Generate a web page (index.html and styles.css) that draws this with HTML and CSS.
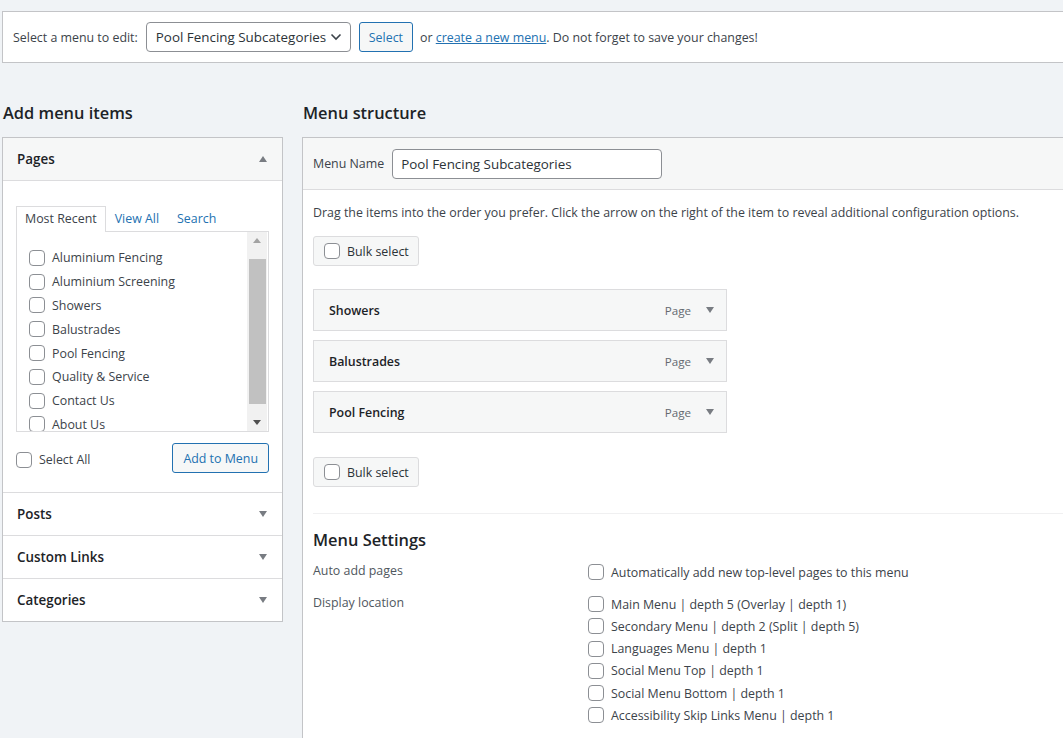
FILE: index.html
```html
<!DOCTYPE html>
<html>
<head>
<meta charset="utf-8">
<link rel="stylesheet" href="styles.css">
</head>
<body>
<div class="manage">
  <span class="label">Select a menu to edit:</span>
  <div class="select">Pool Fencing Subcategories<svg class="chev" width="12" height="8" viewBox="0 0 12 8"><path d="M1.5 1.5 L6 6 L10.5 1.5" fill="none" stroke="#3c434a" stroke-width="1.6"/></svg></div>
  <button class="btn">Select</button>
  <span class="note">or <a href="#">create a new menu</a>. Do not forget to save your changes!</span>
</div>

<div class="cols">
  <div class="left">
    <h2>Add menu items</h2>
    <div class="acc">
      <div class="sec open">
        <div class="sec-head"><span>Pages</span><i class="tri up"></i></div>
        <div class="sec-body">
          <div class="tabs">
            <span class="tab active">Most Recent</span>
            <span class="tab">View All</span>
            <span class="tab">Search</span>
          </div>
          <div class="listbox">
            <ul class="items">
              <li><span class="cb"></span>Aluminium Fencing</li>
              <li><span class="cb"></span>Aluminium Screening</li>
              <li><span class="cb"></span>Showers</li>
              <li><span class="cb"></span>Balustrades</li>
              <li><span class="cb"></span>Pool Fencing</li>
              <li><span class="cb"></span>Quality &amp; Service</li>
              <li><span class="cb"></span>Contact Us</li>
              <li><span class="cb"></span>About Us</li>
            </ul>
            <div class="sbar"><i class="sa up"></i><div class="thumb"></div><i class="sa down"></i></div>
          </div>
          <div class="actions">
            <label class="selall"><span class="cb"></span>Select All</label>
            <button class="btn add">Add to Menu</button>
          </div>
        </div>
      </div>
      <div class="sec"><div class="sec-head"><span>Posts</span><i class="tri"></i></div></div>
      <div class="sec"><div class="sec-head"><span>Custom Links</span><i class="tri"></i></div></div>
      <div class="sec"><div class="sec-head"><span>Categories</span><i class="tri"></i></div></div>
    </div>
  </div>

  <div class="right">
    <h2>Menu structure</h2>
    <div class="panel">
      <div class="panel-head">
        <span class="lbl">Menu Name</span>
        <div class="input">Pool Fencing Subcategories</div>
      </div>
      <div class="panel-body">
        <p class="drag">Drag the items into the order you prefer. Click the arrow on the right of the item to reveal additional configuration options.</p>
        <div class="bulk"><span class="cb"></span>Bulk select</div>
        <div class="mitems">
          <div class="mitem"><span class="t">Showers</span><span class="ty">Page</span><i class="tri"></i></div>
          <div class="mitem"><span class="t">Balustrades</span><span class="ty">Page</span><i class="tri"></i></div>
          <div class="mitem"><span class="t">Pool Fencing</span><span class="ty">Page</span><i class="tri"></i></div>
        </div>
        <div class="bulk"><span class="cb"></span>Bulk select</div>
        <div class="settings">
          <h3>Menu Settings</h3>
          <div class="srow">
            <span class="slabel">Auto add pages</span>
            <div class="opts"><div class="opt"><span class="cb"></span>Automatically add new top-level pages to this menu</div></div>
          </div>
          <div class="srow loc">
            <span class="slabel">Display location</span>
            <div class="opts">
              <div class="opt"><span class="cb"></span>Main Menu | depth 5 (Overlay | depth 1)</div>
              <div class="opt"><span class="cb"></span>Secondary Menu | depth 2 (Split | depth 5)</div>
              <div class="opt"><span class="cb"></span>Languages Menu | depth 1</div>
              <div class="opt"><span class="cb"></span>Social Menu Top | depth 1</div>
              <div class="opt"><span class="cb"></span>Social Menu Bottom | depth 1</div>
              <div class="opt"><span class="cb"></span>Accessibility Skip Links Menu | depth 1</div>
            </div>
          </div>
        </div>
      </div>
    </div>
  </div>
</div>
</body>
</html>
```
FILE: styles.css
```css
* { box-sizing: border-box; }
html, body { margin: 0; padding: 0; }
body {
  background: #f0f3f6;
  font-family: "Open Sans", "Noto Sans", sans-serif;
  font-size: 12.4px;
  color: #3c434a;
  overflow: hidden;
  height: 738px;
}
.manage {
  margin: 11px 0 0 2px;
  height: 52px;
  background: #fff;
  border: 1px solid #c3c4c7;
  border-right: none;
  display: flex;
  align-items: center;
  padding-left: 10px;
  white-space: nowrap;
}
.manage .label { margin-right: 8px; }
.select {
  width: 205px;
  height: 30px;
  border: 1px solid #8c8f94;
  border-radius: 4px;
  display: flex;
  align-items: center;
  justify-content: space-between;
  padding: 0 8px 0 9px;
  font-size: 13.4px;
  color: #2c3338;
  white-space: nowrap;
}
.btn {
  font: inherit;
  height: 30px;
  border: 1px solid #2271b1;
  border-radius: 3px;
  background: #f6f7f7;
  color: #2271b1;
  padding: 0 9px;
  margin-left: 8px;
  font-size: 12.4px;
}
.note { margin-left: 7px; }
.note a { color: #2271b1; text-decoration: underline; }

.cols { display: flex; margin-top: 38px; }
.left { width: 281px; margin-left: 2px; }
.right { flex: 1; margin-left: 19px; }
h2 {
  font-size: 16.4px;
  font-weight: 600;
  color: #1d2327;
  margin: 0 0 12px 1px;
  height: 24px;
  line-height: 24px;
}
.right h2 { margin-left: 1px; }
.acc { background: #fff; border: 1px solid #c3c4c7; }
.sec { border-top: 1px solid #dcdcde; }
.sec:first-child { border-top: none; }
.sec-head {
  height: 42px;
  display: flex;
  align-items: center;
  justify-content: space-between;
  padding: 0 15px 0 14px;
  font-size: 13.4px;
  font-weight: 600;
  color: #1d2327;
}
.sec.open .sec-head { background: #f6f7f7; border-bottom: 1px solid #dcdcde; height: 43px; }
.tri {
  display: inline-block;
  width: 0; height: 0;
  border-left: 4.5px solid transparent;
  border-right: 4.5px solid transparent;
  border-top: 6px solid #787c82;
}
.tri.up { border-top: none; border-bottom: 6px solid #787c82; }
.sec-body { padding: 25px 13px 19px 13px; }
.tabs { display: flex; height: 25px; align-items: flex-end; }
.tab {
  color: #2271b1;
  padding: 0 8px;
  height: 25px;
  line-height: 24px;
  border: 1px solid transparent;
  border-bottom: none;
}
.tab.active {
  color: #3c434a;
  border-color: #dcdcde;
  background: #fff;
  margin-bottom: -1px;
  height: 26px;
  position: relative;
  z-index: 1;
}
.listbox {
  height: 201px;
  border: 1px solid #dcdcde;
  display: flex;
  overflow: hidden;
}
.items { list-style: none; margin: 0; padding: 14px 0 0 12px; flex: 1; }
.items li { display: flex; align-items: center; height: 23.8px; color: #3c434a; white-space: nowrap; }
.cb {
  display: inline-block;
  width: 16px; height: 16px;
  border: 1px solid #8c8f94;
  border-radius: 4px;
  background: #fff;
  margin-right: 7px;
  flex: none;
}
.sbar {
  width: 20px;
  background: #f1f1f1;
  display: flex;
  flex-direction: column;
  align-items: center;
  justify-content: space-between;
  padding: 6px 0 6px;
  margin-right: 1px;
}
.thumb { width: 17px; height: 145px; background: #c1c1c1; }
.sa { width: 0; height: 0; border-left: 4.5px solid transparent; border-right: 4.5px solid transparent; }
.sa.up { border-bottom: 5px solid #a3a3a3; }
.sa.down { border-top: 5px solid #505050; }
.actions { display: flex; justify-content: space-between; align-items: center; margin-top: 11px; }
.selall { display: flex; align-items: center; margin-top: 3px; }
.btn.add { height: 30px; padding: 0 10px; }

.panel { background: #fff; border: 1px solid #c3c4c7; border-right: none; height: 610px; }
.panel-head {
  background: #f6f7f7;
  border-bottom: 1px solid #dcdcde;
  height: 52px;
  display: flex;
  align-items: center;
  padding-left: 10px;
}
.lbl { margin-right: 8px; }
.input {
  width: 270px; height: 30px;
  border: 1px solid #8c8f94;
  border-radius: 4px;
  background: #fff;
  font-size: 13.4px;
  color: #2c3338;
  display: flex; align-items: center;
  padding-left: 8px;
}
.panel-body { padding: 0 0 0 10px; }
.drag { margin: 13px 0 13px 0; line-height: 20px; }
.bulk {
  width: 106px; height: 30px;
  border: 1px solid #dcdcde;
  border-radius: 3px;
  background: #f6f7f7;
  display: flex; align-items: center;
  padding-left: 10px;
  color: #2c3338;
}
.mitems { margin: 23px 0 24px; width: 414px; display: flex; flex-direction: column; gap: 9px; }
.mitem {
  height: 42px;
  border: 1px solid #dcdcde;
  background: #f6f7f7;
  display: flex; align-items: center;
  padding: 0 12px 0 15px;
  font-weight: 600;
  color: #1d2327;
}
.mitem .t { flex: 1; }
.mitem .ty { font-weight: 400; font-size: 11.6px; color: #646970; margin-right: 15px; }
.settings { border-top: 1px solid #f0f0f1; margin-top: 26px; }
.settings h3 { font-size: 16.4px; font-weight: 600; color: #1d2327; margin: 14px 0 9px; line-height: 24px; }
.srow { display: flex; }
.slabel { width: 275px; line-height: 20px; color: #50575e; }
.opts { display: flex; flex-direction: column; }
.opt { display: flex; align-items: center; height: 22.2px; color: #3c434a; }
.srow.loc { margin-top: 10px; }
```
